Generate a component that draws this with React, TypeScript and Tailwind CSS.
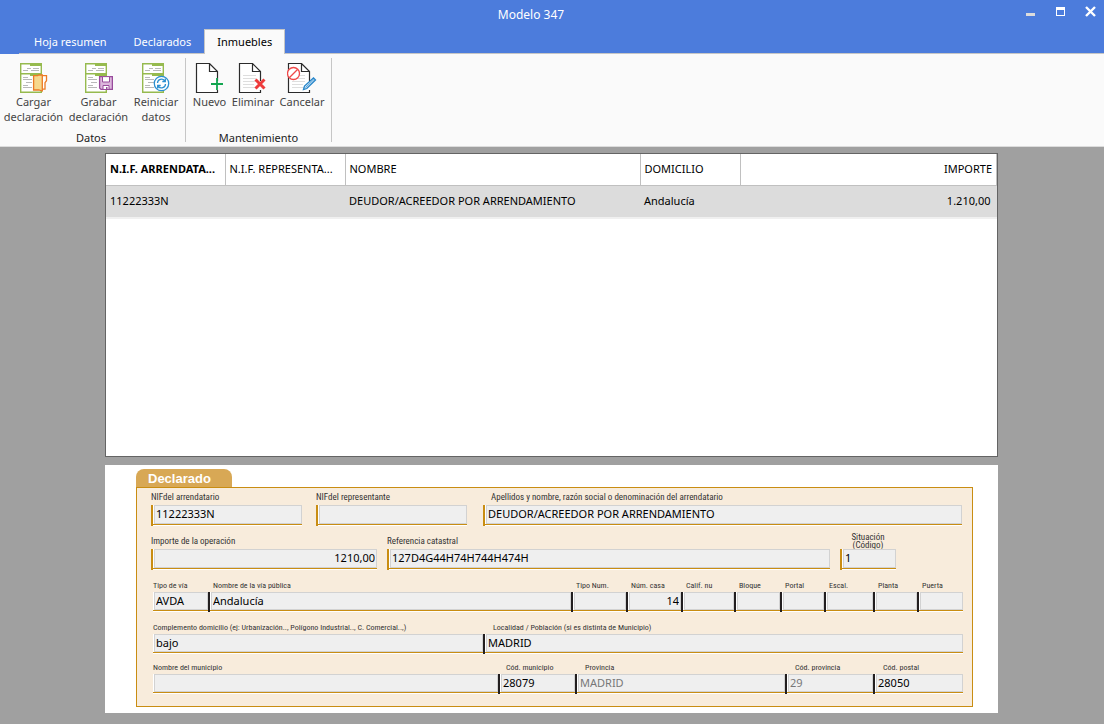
import type { ReactNode } from "react";
import clsx from "clsx";

function DocumentForm({ children }: { children: ReactNode }) {
  return (
    <svg width="28" height="30" viewBox="0 0 28 30" fill="none" aria-hidden="true">
      <path d="M.7.7h20.6v28.6H.7z" fill="#fff" stroke="#96ba4e" strokeWidth="1.4" />
      <path d="M10 0h12v3H10zM0 10h22v1.4H0zM10 11h12v2H10z" fill="#96ba4e" />
      <path
        d="M7 5.5h4M13 5.5h6M3 7.5h5M11 7.5h8M3 14.5h5M3 16.5h9M6 19.5h6M3 22.5h5M3 24.5h9"
        stroke="#b9b9b9"
      />
      {children}
    </svg>
  );
}

function BlankSheet({ lines, children }: { lines?: boolean; children: ReactNode }) {
  return (
    <svg width="30" height="30" viewBox="0 0 30 30" fill="none" aria-hidden="true">
      <path d="M1.5.5h13l8 8v21h-21z" fill="#fff" />
      <path d="M22.5 18V8.500l-8-8h-13v29h21V27M14.500.5v8h8" stroke="#2b2b2b" strokeWidth="1.200" />
      {lines && (
        <path d="M5 12.500h13M5 15.500h13M5 18.500h13M5 21.500h11M5 24.500h13" stroke="#dedede" />
      )}
      {children}
    </svg>
  );
}

function LoadIcon() {
  return (
    <DocumentForm>
      <path d="M21 12.700h5.500v5l-1.500 2v6.500h-4z" fill="#fff" stroke="#ec7a24" strokeWidth="1.300" />
      <path d="M13.600 12.700h4l1-.7h3.700v16l-3.500-1h-5.200z" fill="#f6d88d" stroke="#ec7a24" strokeWidth="1.300" />
    </DocumentForm>
  );
}

function SaveIcon() {
  return (
    <DocumentForm>
      <path d="M14.600 13.600h12.800v12.800H16l-1.400-1.400z" fill="#dcb6dc" stroke="#984b9c" strokeWidth="1.300" />
      <path d="M17.500 13.600h7v5.400h-7zM18 22.500h6v4h-6z" fill="#fff" stroke="#984b9c" />
      <path d="M21 24h1.500v2H21z" fill="#984b9c" />
    </DocumentForm>
  );
}

function ResetIcon() {
  return (
    <DocumentForm>
      <circle cx="19.500" cy="20.500" r="7.200" fill="#fff" stroke="#2b8fd0" strokeWidth="1.300" />
      <path
        d="M15.500 20a4 4 0 0 1 7.200-2.200M23.500 21a4 4 0 0 1-7.200 2.300M23.300 15.500v3h-3M15.700 25.500v-3h3"
        stroke="#2b8fd0"
        strokeWidth="1.300"
      />
    </DocumentForm>
  );
}

function NewIcon() {
  return (
    <BlankSheet>
      <path d="M22 15v12M16 21h12" stroke="#12a650" strokeWidth="1.800" />
    </BlankSheet>
  );
}

function DeleteIcon() {
  return (
    <BlankSheet lines>
      <path d="m17.500 16.500 9 9M26.500 16.500l-9 9" stroke="#ee3b3b" strokeWidth="3" />
    </BlankSheet>
  );
}

function CancelIcon() {
  return (
    <BlankSheet lines>
      <circle cx="6.500" cy="10.500" r="6" fill="#fff" stroke="#f04848" strokeWidth="1.300" />
      <path d="m2.500 14.500 8-8" stroke="#f04848" strokeWidth="1.300" />
      <path d="m16.500 26.500 1-3.500 9-8 2 2-8.700 8.500z" fill="#d5eaf9" stroke="#2685c9" strokeWidth="1.300" />
      <path d="m18.500 24.500 8.500-8" stroke="#2685c9" strokeWidth=".7" />
    </BlankSheet>
  );
}

type RibbonButtonProps = { icon: ReactNode; width: string; children: ReactNode };

function RibbonButton({ icon, width, children }: RibbonButtonProps) {
  return (
    <button
      type="button"
      className={clsx("flex flex-col items-center text-center text-[11px] leading-[15px] text-[#444]", width)}
    >
      {icon}
      <span className="mt-px">{children}</span>
    </button>
  );
}

function RibbonGroup({ title, padding, children }: { title: string; padding: string; children: ReactNode }) {
  return (
    <section className={clsx("flex flex-col justify-between border-r border-[#c6c6c6] pt-[5px]", padding)}>
      <div className="flex items-start gap-[6px]">{children}</div>
      <h2 className="text-center text-[11px] leading-[9px] text-[#222]">{title}</h2>
    </section>
  );
}

type FieldProps = {
  id: string;
  label: ReactNode;
  value?: string;
  width: string;
  // "gold" boxes are the tall ones, "black" and "none" share one ruled line
  bar?: "gold" | "black" | "none";
  indent?: string;
  right?: boolean;
  disabled?: boolean;
};

function Field({ id, label, value = "", width, bar = "black", indent, right, disabled }: FieldProps) {
  const tall = bar === "gold";
  return (
    <div className={clsx("flex min-w-0 flex-col justify-end", width)}>
      <label
        htmlFor={id}
        className={clsx(
          "whitespace-nowrap font-['Roboto_Condensed','Open_Sans_Condensed','Liberation_Sans',sans-serif] text-[#333]",
          tall ? "text-[9px] leading-4" : "text-[8px] leading-3",
          indent
        )}
      >
        {label}
      </label>
      <div
        className={clsx(
          "flex",
          bar === "gold" && "border-l-2 border-[#c98d12]",
          bar === "black" && "border-l-2 border-[#231f20]"
        )}
      >
        <div className="min-w-0 flex-1 border-b border-white bg-[#c98d12]">
          <div className="mb-px bg-white pl-px">
            <input
              id={id}
              defaultValue={value}
              disabled={disabled}
              className={clsx(
                "block w-full border border-[#d2d2d2] bg-[#efefef] px-px pb-0.5 text-[11px]",
                tall ? "h-[19px]" : "h-[18px]",
                right && "text-right",
                disabled ? "text-[#777]" : "text-black"
              )}
            />
          </div>
        </div>
      </div>
    </div>
  );
}

const columns = [
  { title: "N.I.F. ARRENDATA...", full: "N.I.F. ARRENDATARIO", className: "w-[119px] font-bold" },
  { title: "N.I.F. REPRESENTA...", full: "N.I.F. REPRESENTANTE", className: "w-[120px] font-normal" },
  { title: "NOMBRE", className: "w-[295px] font-normal" },
  { title: "DOMICILIO", className: "w-[100px] font-normal" },
  { title: "IMPORTE", className: "text-right font-normal" },
];

export default function App() {
  return (
    <div className="flex min-h-screen flex-col bg-[#a0a0a0] font-['Noto_Sans','Open_Sans',sans-serif] text-[11px] text-black">
      <header className="bg-[#4c7cdc] text-white">
        <div className="flex h-[29px] items-center">
          <h1 className="flex-1 pl-[46px] text-center text-xs">Modelo 347</h1>
          <div className="flex w-[88px] items-start justify-between pr-2 pb-[6px] pl-[9px]">
            <button type="button" aria-label="Minimizar">
              <svg width="11" height="11" viewBox="0 0 11 11">
                <path d="M1 7h9v3H1z" fill="#dcdcdc" />
              </svg>
            </button>
            <button type="button" aria-label="Maximizar">
              <svg width="11" height="11" viewBox="0 0 11 11">
                <path d="M1 1h9v9H1zM2 4v5h7V4z" fill="#fff" fillRule="evenodd" />
              </svg>
            </button>
            <button type="button" aria-label="Cerrar">
              <svg width="11" height="11" viewBox="0 0 11 11">
                <path d="m1 1 9 9M10 1l-9 9" stroke="#fff" strokeWidth="2.400" />
              </svg>
            </button>
          </div>
        </div>
        <nav className="flex pl-[19px] text-[11px]">
          <button type="button" className="h-[25px] border-b border-[#c6c6c6] pt-0.5 pr-[14px] pl-[15px]">
            Hoja resumen
          </button>
          <button type="button" className="h-[25px] border-b border-[#c6c6c6] px-[13px] pt-0.5">
            Declarados
          </button>
          <button
            type="button"
            className="h-[25px] border border-b-0 border-[#c6c6c6] bg-[#fafafa] px-3 text-black"
          >
            Inmuebles
          </button>
          <span className="flex-1 border-b border-[#c6c6c6]" />
        </nav>
      </header>

      <div className="flex h-[93px] border-b border-[#dcdcdc] bg-[#fafafa] pt-1 pb-1">
        <RibbonGroup title="Datos" padding="pl-1 pr-[7px]">
          <RibbonButton width="w-[59px]" icon={<LoadIcon />}>Cargar declaración</RibbonButton>
          <RibbonButton width="w-[59px]" icon={<SaveIcon />}>Grabar declaración</RibbonButton>
          <RibbonButton width="w-[44px]" icon={<ResetIcon />}>Reiniciar datos</RibbonButton>
        </RibbonGroup>
        <RibbonGroup title="Mantenimiento" padding="px-[7px]">
          <RibbonButton width="w-[33px]" icon={<NewIcon />}>Nuevo</RibbonButton>
          <RibbonButton width="w-[42px]" icon={<DeleteIcon />}>Eliminar</RibbonButton>
          <RibbonButton width="w-[44px]" icon={<CancelIcon />}>Cancelar</RibbonButton>
        </RibbonGroup>
      </div>

      <main className="flex flex-1 flex-col gap-2 pt-[6px] pr-[106px] pb-[11px] pl-[105px]">
        <div className="flex-1 border border-[#646464] bg-white">
          <table className="w-full table-fixed">
            <thead>
              <tr className="h-[31px] border-b border-[#c0c0c0] text-left">
                {columns.map((c) => (
                  <th
                    key={c.title}
                    title={c.full}
                    className={clsx("whitespace-nowrap border-r border-[#c0c0c0] px-1", c.className)}
                  >
                    {c.title}
                  </th>
                ))}
              </tr>
            </thead>
            <tbody>
              <tr className="h-[33px] border-b-2 border-[#f0f0f0] bg-[#dcdcdc]">
                <td className="px-1">11222333N</td>
                <td className="px-1" />
                <td className="px-1">DEUDOR/ACREEDOR POR ARRENDAMIENTO</td>
                <td className="px-1">Andalucía</td>
                <td className="px-1.5 text-right">1.210,00</td>
              </tr>
            </tbody>
          </table>
        </div>

        <form className="bg-white pt-1 pr-[25px] pb-[6px] pl-[31px]">
          <h2 className="h-[18px] w-24 rounded-t-lg bg-[#d8a855] pl-3 font-['Liberation_Sans',sans-serif] text-[13px] leading-5 font-bold text-white">
            Declarado
          </h2>
          <div className="border border-[#c98d12] bg-[#f8ecdc] pt-px pb-3">
            <div className="flex pr-[10px] pl-[14px]">
              <Field id="nif" label="NIFdel arrendatario" value="11222333N" width="w-[151px]" bar="gold" />
              <Field id="nifRep" label="NIFdel representante" width="w-[151px] ml-[14px]" bar="gold" />
              <Field
                id="nombre"
                label="Apellidos y nombre, razón social o denominación del arrendatario"
                value="DEUDOR/ACREEDOR POR ARRENDAMIENTO"
                width="flex-1 ml-4"
                bar="gold"
                indent="pl-2"
              />
            </div>
            <div className="mt-[7px] flex pr-[76px] pl-[14px]">
              <Field id="importe" label="Importe de la operación" value="1210,00" width="w-[226px]" bar="gold" right />
              <Field
                id="catastral"
                label="Referencia catastral"
                value="127D4G44H74H744H474H"
                width="flex-1 ml-[10px]"
                bar="gold"
              />
              <Field
                id="situacion"
                label={<span className="block text-center leading-[8px]">Situación<br />(Código)</span>}
                value="1"
                width="w-[56px] ml-[10px]"
                bar="gold"
              />
            </div>
            <div className="mt-[10px] flex pr-[9px] pl-4">
              <Field id="tipoVia" label="Tipo de vía" value="AVDA" width="w-[55px]" bar="none" />
              <Field id="via" label="Nombre de la vía pública" value="Andalucía" width="flex-1" indent="pl-[5px]" />
              <Field id="tipoNum" label="Tipo Num." width="w-[55px]" indent="pl-[5px]" />
              <Field id="casa" label="Núm. casa" value="14" width="w-[55px]" indent="pl-[5px]" right />
              <Field id="calif" label="Calif. nu" width="w-[53px]" indent="pl-[5px]" />
              <Field id="bloque" label="Bloque" width="w-[46px]" indent="pl-[5px]" />
              <Field id="portal" label="Portal" width="w-[44px]" indent="pl-[5px]" />
              <Field id="escal" label="Escal." width="w-[49px]" indent="pl-[5px]" />
              <Field id="planta" label="Planta" width="w-[44px]" indent="pl-[5px]" />
              <Field id="puerta" label="Puerta" width="w-[46px]" indent="pl-[5px]" />
            </div>
            <div className="mt-[10px] flex pr-[9px] pl-4">
              <Field
                id="complemento"
                label="Complemento domicilio (ej: Urbanización.., Polígono Industrial.., C. Comercial..,)"
                value="bajo"
                width="w-[330px]"
                bar="none"
              />
              <Field
                id="localidad"
                label="Localidad / Población (si es distinta de Municipio)"
                value="MADRID"
                width="flex-1"
                indent="pl-[10px]"
              />
            </div>
            <div className="mt-2 flex pr-[9px] pl-4">
              <Field id="municipio" label="Nombre del municipio" width="flex-1" bar="none" />
              <Field id="codMunicipio" label="Cód. municipio" value="28079" width="w-[77px]" indent="pl-2" />
              <Field id="provincia" label="Provincia" value="MADRID" width="w-[210px]" indent="pl-[10px]" disabled />
              <Field id="codProvincia" label="Cód. provincia" value="29" width="w-[88px]" indent="pl-[10px]" disabled />
              <Field id="codPostal" label="Cód. postal" value="28050" width="w-[90px]" indent="pl-[10px]" />
            </div>
          </div>
        </form>
      </main>
    </div>
  );
}
